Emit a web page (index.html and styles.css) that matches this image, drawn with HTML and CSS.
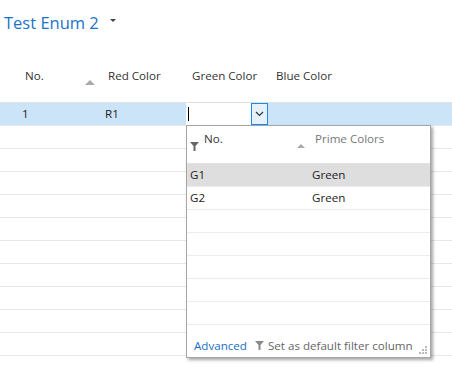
FILE: index.html
```
<!DOCTYPE html>
<html>
<head>
    <link rel="stylesheet" href="styles.css">
</head>
<body>
    <div class="title">
        <span class="title-text">Test Enum 2</span>
        <span class="title-caret"></span>
    </div>

    <div class="grid">
        <div class="grid-head">
            <div class="col col-no">No.<span class="sort-up"></span></div>
            <div class="col">Red Color</div>
            <div class="col">Green Color</div>
            <div class="col">Blue Color</div>
        </div>
        <div class="grid-row selected">
            <div class="cell cell-no">1</div>
            <div class="cell">R1</div>
            <div class="cell cell-edit">
                <div class="lookup">
                    <span class="caret"></span>
                    <span class="lookup-btn">
                        <svg width="9" height="6" viewBox="0 0 9 6"><path d="M1 1 L4.5 4.5 L8 1" fill="none" stroke="#333" stroke-width="1.2"/></svg>
                    </span>
                </div>
            </div>
            <div class="cell"></div>
        </div>
        <div class="grid-row"></div>
        <div class="grid-row"></div>
        <div class="grid-row"></div>
        <div class="grid-row"></div>
        <div class="grid-row"></div>
        <div class="grid-row"></div>
        <div class="grid-row"></div>
        <div class="grid-row"></div>
        <div class="grid-row"></div>
        <div class="grid-row"></div>

        <!-- dropdown list for Green Color -->
        <div class="popup">
            <div class="popup-head">
                <div class="pcol pcol-no">
                    <svg class="funnel" width="9" height="9" viewBox="0 0 9 9"><path d="M0 0 H9 L5.5 4 V9 H3.5 V4 Z" fill="#666"/></svg>
                    <span>No.</span>
                    <span class="sort-up small"></span>
                </div>
                <div class="pcol pcol-name">Prime Colors</div>
            </div>
            <div class="popup-row active"><span class="pc-no">G1</span><span>Green</span></div>
            <div class="popup-row"><span class="pc-no">G2</span><span>Green</span></div>
            <div class="popup-row"></div>
            <div class="popup-row"></div>
            <div class="popup-row"></div>
            <div class="popup-row"></div>
            <div class="popup-row"></div>
            <div class="popup-foot">
                <span class="link">Advanced</span>
                <svg class="funnel" width="9" height="9" viewBox="0 0 9 9"><path d="M0 0 H9 L5.5 4 V9 H3.5 V4 Z" fill="#888"/></svg>
                <span class="hint">Set as default filter column</span>
                <svg class="grip" width="8" height="8" viewBox="0 0 8 8">
                    <rect x="6" y="0" width="2" height="2" fill="#bbb"/>
                    <rect x="3" y="3" width="2" height="2" fill="#bbb"/>
                    <rect x="6" y="3" width="2" height="2" fill="#bbb"/>
                    <rect x="0" y="6" width="2" height="2" fill="#bbb"/>
                    <rect x="3" y="6" width="2" height="2" fill="#bbb"/>
                    <rect x="6" y="6" width="2" height="2" fill="#bbb"/>
                </svg>
            </div>
        </div>
    </div>
</body>
</html>
```

FILE: styles.css
```
body {
    margin: 0;
    width: 452px;
    height: 372px;
    overflow: hidden;
    background: #fff;
    font-family: "Segoe UI", "Open Sans", sans-serif;
    font-size: 11.6px;
    color: #222;
}
.title {
    height: 44px;
    padding-left: 4px;
    display: flex;
    align-items: center;
}
.title-text {
    font-size: 16.5px;
    color: #1a73c9;
}
.title-caret {
    margin-left: 11px;
    margin-top: -3px;
    border-left: 3px solid transparent;
    border-right: 3px solid transparent;
    border-top: 3px solid #444;
}
.grid {
    position: relative;
}
.grid-head {
    height: 58px;
    display: grid;
    grid-template-columns: 100px 84px 84px 1fr;
    border-bottom: 1px solid #e2e2e2;
}
.col {
    padding: 24px 0 0 8px;
    color: #333;
}
.col-no {
    padding-left: 25px;
    display: flex;
    justify-content: space-between;
    padding-right: 5px;
}
.sort-up {
    width: 0;
    height: 0;
    margin-top: 12px;
    border-left: 5px solid transparent;
    border-right: 5px solid transparent;
    border-bottom: 5px solid #aaa;
}
.grid-row {
    height: 23px;
    box-sizing: border-box;
    border-bottom: 1px solid #e8e8e8;
    display: grid;
    grid-template-columns: 100px 84px 84px 1fr;
}
.grid-row.selected {
    background: #cce4f7;
}
.cell {
    padding-left: 5px;
    line-height: 22px;
}
.cell-no {
    padding-left: 22px;
}
.cell-edit {
    padding-left: 2px;
}
.lookup {
    height: 22px;
    display: flex;
    background: #fff;
}
.caret {
    width: 1px;
    height: 14px;
    margin: 4px auto 0 2px;
    background: #000;
}
.lookup-btn {
    width: 15px;
    height: 20px;
    border: 1px solid #1e88e5;
    background: #e5f1fb;
    display: flex;
    align-items: center;
    justify-content: center;
}
.popup {
    position: absolute;
    left: 186px;
    top: 81px;
    width: 243px;
    height: 231px;
    background: #fff;
    border: 1px solid #a6a6a6;
    box-shadow: 2px 2px 3px rgba(0, 0, 0, 0.35);
    display: flex;
    flex-direction: column;
}
.popup-head {
    height: 37px;
    display: flex;
    border-bottom: 1px solid #e2e2e2;
}
.pcol {
    padding-top: 5px;
}
.pcol-no {
    width: 124px;
    display: flex;
    align-items: flex-start;
    color: #333;
}
.pcol-no .funnel {
    margin: 11px 5px 0 3px;
}
.pcol-no .sort-up {
    margin-left: auto;
    margin-top: 13px;
    margin-right: 6px;
    border-left-width: 4px;
    border-right-width: 4px;
    border-bottom-width: 4px;
}
.pcol-name {
    color: #777;
    padding-left: 4px;
}
.popup-row {
    height: 23px;
    box-sizing: border-box;
    border-bottom: 1px solid #ececec;
    display: flex;
    line-height: 22px;
}
.popup-row.active {
    background: #dedede;
}
.pc-no {
    width: 122px;
    padding-left: 3px;
}
.popup-foot {
    flex: 1;
    display: flex;
    align-items: center;
    padding: 8px 3px 0 7px;
    position: relative;
}
.link {
    color: #1a6fc4;
}
.popup-foot .funnel {
    margin: 0 4px 0 8px;
}
.hint {
    color: #666;
}
.grip {
    position: absolute;
    right: 3px;
    bottom: 3px;
}
```
